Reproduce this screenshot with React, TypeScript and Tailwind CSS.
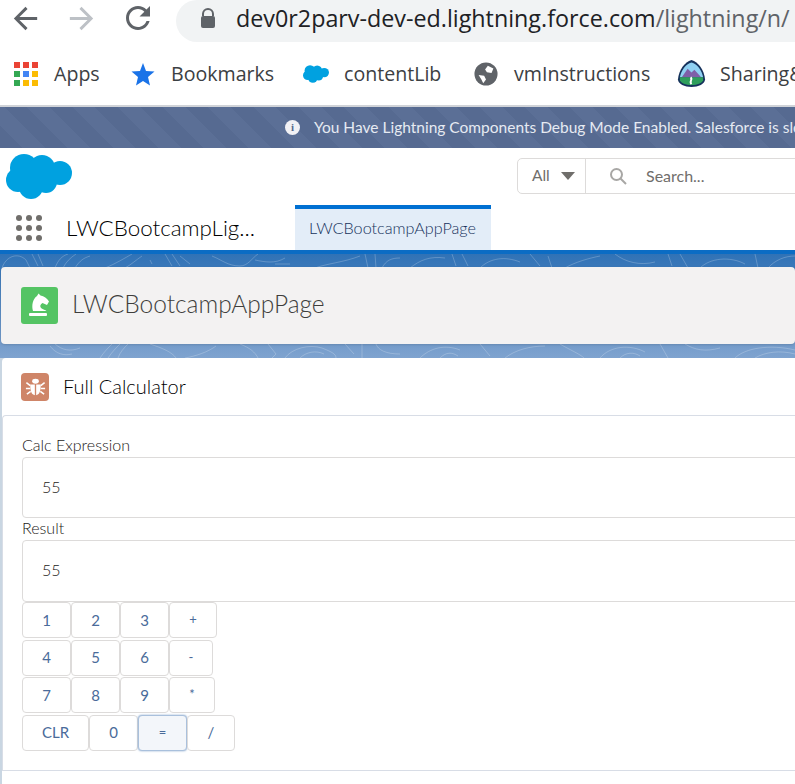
const keyRows = [
  [
    { label: "1", w: "w-[49px]" },
    { label: "2", w: "w-[49px]" },
    { label: "3", w: "w-[49px]" },
    { label: "+", w: "w-[48px]", op: true },
  ],
  [
    { label: "4", w: "w-[49px]" },
    { label: "5", w: "w-[49px]" },
    { label: "6", w: "w-[49px]" },
    { label: "-", w: "w-[44px]", op: true },
  ],
  [
    { label: "7", w: "w-[49px]" },
    { label: "8", w: "w-[49px]" },
    { label: "9", w: "w-[49px]" },
    { label: "*", w: "w-[46px]", op: true },
  ],
  [
    { label: "CLR", w: "w-[67px]" },
    { label: "0", w: "w-[49px]" },
    { label: "=", w: "w-[49px]", op: true, focus: true },
    { label: "/", w: "w-[48px]" },
  ],
]

function Cloud({ className }: { className: string }) {
  return (
    <svg viewBox="6 154 66 45" className={className} fill="#00a1e0">
      <circle cx="24" cy="168" r="14" />
      <circle cx="42" cy="168" r="13" />
      <circle cx="60" cy="173" r="12" />
      <circle cx="18" cy="180" r="12" />
      <circle cx="31" cy="187" r="12" />
      <circle cx="46" cy="182" r="11" />
      <rect x="20" y="165" width="38" height="18" />
    </svg>
  )
}

function AppsIcon() {
  const colors = ["#ea4335", "#ea4335", "#ea4335", "#34a853", "#4285f4", "#fbbc04", "#34a853", "#fbbc04", "#fbbc04"]
  return (
    <div className="grid grid-cols-3 gap-[3px] w-[24px] shrink-0">
      {colors.map((c, i) => (
        <span key={i} className="w-[6px] h-[6px]" style={{ backgroundColor: c }} />
      ))}
    </div>
  )
}

function TrailheadBadge() {
  return (
    <svg viewBox="0 0 30 30" className="w-[29px] h-[29px] shrink-0">
      <path d="M15 1 C22 3 28 11 29 21 C29 26 22 29 15 29 C8 29 1 26 1 21 C2 11 8 3 15 1Z" fill="#16325c" />
      <path d="M15 3.5 C21 5 26 12 27 19 L3 19 C4 12 9 5 15 3.5Z" fill="#8fd0f2" />
      <path d="M5 19 L11 10 L15 14 L18 11 L25 19Z" fill="#7f5fa8" />
      <path d="M3 19 H27 V22 C26 25 21 27 15 27 C9 27 4 25 3 22Z" fill="#2e9e5b" />
      <path d="M14 19 C17 21 12 23 15 26" stroke="#fff" strokeWidth="2" fill="none" />
    </svg>
  )
}

// contour lines, only the strips above and below the page header show
function Topo() {
  return (
    <svg className="absolute inset-0 w-full h-full" viewBox="0 0 795 104" fill="none" stroke="#ffffff" strokeOpacity="0.22">
      <path d="M2 14 C6 2 18 -2 26 6 L30 14 M32 0 L38 12 M38 0 L43 12 M55 14 C58 6 62 2 68 0 M63 14 C66 8 70 4 76 0 M75 14 C80 6 84 4 90 2" />
      <path d="M105 14 C115 10 125 4 132 0 M125 14 C132 10 136 6 142 2 M150 6 L152 10 M165 0 L172 12 M172 0 L180 12 M180 2 L190 10" />
      <path d="M212 2 C222 6 228 12 240 12 C248 12 252 4 258 0 M255 6 C265 8 275 10 285 4 M275 10 H290 M315 14 C325 10 345 8 360 2 M365 0 L368 14 M375 0 L376 14 M382 14 C386 6 392 4 400 4" />
      <path d="M410 14 C420 6 430 2 445 4 M452 0 L456 12 M462 0 L468 12 M480 14 C490 4 505 2 520 8 M530 0 L540 12 M548 2 L552 14 M565 14 C575 8 590 4 600 2" />
      <path d="M615 0 C625 8 640 12 655 8 M668 0 L672 12 M680 0 L688 14 M700 14 C710 4 730 2 745 10 M755 0 L758 14 M768 14 C775 6 785 2 795 2" />
      <path d="M50 92 C56 100 64 102 72 100 M55 90 C62 96 70 98 80 94 M100 104 C104 98 108 94 112 90 M108 104 C112 98 116 94 120 90 M118 104 C120 98 124 94 128 90" />
      <path d="M150 90 C162 94 172 98 176 104 M185 104 C196 102 208 98 216 92 M240 90 C250 94 255 98 258 104 M268 90 L276 100 L272 104" />
      <path d="M285 104 C292 94 310 90 322 94 C332 98 336 100 336 104 M300 104 C306 98 316 96 324 100 M345 90 L354 100 M362 90 L362 104 M376 90 C378 96 386 100 400 100" />
      <path d="M420 104 C430 94 445 90 460 96 M440 104 C446 98 452 98 458 102 M480 90 L490 102 M505 104 C515 96 530 92 545 92 M560 90 C570 96 580 100 584 104" />
      <path d="M600 104 C610 92 630 90 645 98 M620 104 C626 98 634 98 640 102 M660 90 L668 104 M685 90 C695 96 705 98 720 94 M735 104 C745 94 770 90 795 96 M755 104 C765 98 780 96 795 100" />
    </svg>
  )
}

export default function App() {
  return (
    <div className="w-[795px] h-[784px] overflow-hidden flex flex-col bg-white font-['Lato',sans-serif]">
      {/* browser chrome */}
      <div className="h-[42px] shrink-0 flex items-center font-['Open_Sans',sans-serif]">
        <svg viewBox="0 0 24 24" className="ml-[8px] mb-[6px] w-[35px] h-[35px] shrink-0" fill="#5f6368">
          <path d="M20 11H7.83l5.59-5.59L12 4l-8 8 8 8 1.41-1.41L7.83 13H20v-2z" />
        </svg>
        <svg viewBox="0 0 24 24" className="ml-[21px] mb-[6px] w-[35px] h-[35px] shrink-0" fill="#bdc1c6">
          <path d="M12 4l-1.41 1.41L16.17 11H4v2h12.17l-5.58 5.59L12 20l8-8z" />
        </svg>
        <svg viewBox="0 0 24 24" className="ml-[21px] mb-[6px] w-[36px] h-[36px] shrink-0" fill="#5f6368">
          <path d="M17.65 6.35C16.2 4.9 14.21 4 12 4c-4.42 0-7.99 3.58-7.99 8s3.57 8 7.99 8c3.73 0 6.84-2.55 7.73-6h-2.08c-.82 2.33-3.04 4-5.65 4-3.31 0-6-2.69-6-6s2.69-6 6-6c1.66 0 3.14.69 4.22 1.78L13 11h7V4l-2.35 2.35z" />
        </svg>
        <div className="ml-[20px] flex-1 h-[42px] rounded-l-[24px] bg-[#f1f3f4] flex items-center pl-[24px] pb-[6px] whitespace-nowrap overflow-hidden">
          <svg viewBox="0 0 16 20" className="w-[16px] h-[20px] shrink-0">
            <path d="M3 8 V6 a5 5 0 0 1 10 0 V8" fill="none" stroke="#5f6368" strokeWidth="2" />
            <rect x="1" y="8" width="14" height="12" rx="2" fill="#5f6368" />
          </svg>
          <span className="ml-[20px] text-[23.3px] text-[#202124]">dev0r2parv-dev-ed.lightning.force.com</span>
          <span className="text-[23.3px] text-[#5f6368]">/lightning/n/</span>
        </div>
      </div>

      {/* bookmarks */}
      <div className="h-[65px] shrink-0 flex items-center pl-[14px] text-[19.6px] text-[#3c4043] whitespace-nowrap font-['Open_Sans',sans-serif] border-b-2 border-[#d0d3d8]">
        <AppsIcon />
        <span className="ml-[16px] w-[47px] shrink-0">Apps</span>
        <svg viewBox="0 0 24 24" className="ml-[30px] w-[24px] h-[24px] shrink-0" fill="#1a73e8">
          <path d="M12 1 L15 9 L23.5 9.5 L17 15 L19 23.5 L12 19 L5 23.5 L7 15 L0.5 9.5 L9 9Z" />
        </svg>
        <span className="ml-[16px] w-[102px] shrink-0">Bookmarks</span>
        <Cloud className="ml-[30px] w-[26px] h-[18px] shrink-0" />
        <span className="ml-[15px] w-[98px] shrink-0">contentLib</span>
        <svg viewBox="0 0 26 26" className="ml-[32px] w-[24px] h-[24px] shrink-0">
          <circle cx="13" cy="13" r="12.5" fill="#5f6368" />
          <path d="M15 4 L21 7 L19 12 L14 11 L12 8Z M5 14 L11 15 L13 19 L10 23 L8 19Z" fill="#fff" />
        </svg>
        <span className="ml-[16px] w-[136px] shrink-0">vmInstructions</span>
        <div className="ml-[27px]"><TrailheadBadge /></div>
        <span className="ml-[14px]">Sharing&amp;</span>
      </div>

      {/* debug banner */}
      <div className="h-[41px] shrink-0 flex items-center pl-[285px] text-[15.5px] text-[#e6eaf2] whitespace-nowrap bg-[repeating-linear-gradient(45deg,#566a91,#566a91_16px,#5b6f96_16px,#5b6f96_32px)]">
        <span className="w-[15px] h-[15px] rounded-full bg-[#f1f1f5] text-[#54698d] text-[11px] font-bold flex items-center justify-center shrink-0 font-['Liberation_Serif',serif]">i</span>
        <span className="ml-[14px]">You Have Lightning Components Debug Mode Enabled. Salesforce is slower</span>
      </div>

      {/* global header */}
      <div className="h-[57px] shrink-0 flex bg-white">
        <Cloud className="ml-[6px] mt-[6px] w-[66px] h-[45px] shrink-0" />
        <div className="ml-[445px] mt-[10px] h-[36px] w-[400px] shrink-0 flex items-center rounded-l-[5px] border border-[#dddbda] text-[#706e6b] text-[16px]">
          <div className="w-[68px] h-full shrink-0 flex items-center pl-[14px] border-r border-[#dddbda]">
            <span className="text-[15.5px]">All</span>
            <svg viewBox="0 0 14 8" className="ml-[11px] w-[14px] h-[8px]"><path d="M0 0 H14 L7 8Z" fill="#706e6b" /></svg>
          </div>
          <svg viewBox="0 0 18 18" className="ml-[23px] w-[18px] h-[18px] shrink-0" fill="none" stroke="#a8a7a5" strokeWidth="2">
            <circle cx="7.5" cy="7.5" r="5.5" />
            <path d="M11.5 11.5 L17 17" />
          </svg>
          <span className="ml-[19px]">Search...</span>
        </div>
      </div>

      {/* app nav */}
      <div className="h-[45px] shrink-0 flex bg-white">
        <div className="ml-[16px] mt-[10px] w-[26px] h-[26px] grid grid-cols-3 gap-[4px] shrink-0">
          {Array.from({ length: 9 }).map((_, i) => (
            <span key={i} className="w-[6px] h-[6px] rounded-full bg-[#706e6b]" />
          ))}
        </div>
        <span className="ml-[24px] mt-[6px] w-[191px] shrink-0 text-[22.4px] font-light text-[#000000] whitespace-nowrap">LWCBootcampLig...</span>
        <div className="ml-[38px] w-[196px] shrink-0 bg-[#e3edf8] border-t-[4px] border-[#0070d2] flex items-center pl-[14px] pb-[3px] text-[16.2px] font-light text-[#16325c] whitespace-nowrap">
          LWCBootcampAppPage
        </div>
      </div>

      {/* page body */}
      <div className="relative h-[108px] shrink-0 border-t-[4px] border-[#0b6cc4] bg-[linear-gradient(180deg,#3072b6,#7fa3cf)] pt-[13px] pl-[1px]">
        <Topo />
        <div className="relative h-[77px] rounded-[4px] bg-[#f3f2f2] flex items-center pl-[20px] shadow-sm">
          <div className="w-[37px] h-[37px] rounded-[3px] bg-[#54c464] shrink-0">
            <svg viewBox="0 0 37 37" className="w-[37px] h-[37px]" fill="#ffffff">
              <path d="M12 24 C10.5 19 11.5 12 16 9 L17.5 6.5 L19.5 8.5 C23 9 26 11.5 28 14.5 L26 18 L21.5 16 C19.5 17 18.5 19 20 21 C22 22.5 24.5 23 25.5 24 Z" />
              <rect x="8" y="26" width="18" height="3" rx="1" />
            </svg>
          </div>
          <span className="ml-[14px] pb-[2px] text-[24.5px] font-light text-[#3e3e3c] whitespace-nowrap">LWCBootcampAppPage</span>
        </div>
      </div>

      {/* card */}
      <div className="flex-1 bg-[#c9d6e2] pl-[2px]">
        <div className="h-full rounded-tl-[4px] bg-white flex flex-col">
          <div className="h-[57px] shrink-0 flex items-center pl-[19px]">
            <div className="w-[28px] h-[28px] rounded-[4px] bg-[#cf8568] flex items-center justify-center shrink-0">
              <svg viewBox="0 0 24 24" className="w-[23px] h-[23px]" fill="#ffffff" stroke="#ffffff" strokeWidth="1.6">
                <ellipse cx="12" cy="6.5" rx="3.5" ry="2.5" stroke="none" />
                <path d="M6.5 10 H11.3 V21 C8 21 6.5 17 6.5 10Z M12.7 10 H17.5 C17.5 17 16 21 12.7 21Z" stroke="none" />
                <path d="M2.5 8 L6.5 11 M21.5 8 L17.5 11 M2 14 H6.5 M22 14 H17.5 M3 20 L7 17 M21 20 L17 17" fill="none" />
              </svg>
            </div>
            <span className="ml-[14px] pb-[2px] text-[20px] font-light text-[#000000] whitespace-nowrap">Full Calculator</span>
          </div>
          <div className="h-[356px] shrink-0 rounded-tl-[4px] border-t border-l border-b border-[#d8dde6] pl-[19px] pt-[21px] text-[16px] font-light text-[#1c1a18]">
            <div className="h-[20px] leading-[16px]">Calc Expression</div>
            <div className="h-[61px] w-[800px] rounded-[4px] border border-[#dddbda] flex items-center pl-[19px] pb-[2px]">55</div>
            <div className="h-[22px] leading-[20px]">Result</div>
            <div className="h-[62px] w-[800px] rounded-[4px] border border-[#dddbda] flex items-center pl-[19px] pb-[2px]">55</div>
            <div className="flex flex-col gap-[1.5px]">
              {keyRows.map((row, r) => (
                <div key={r} className="flex h-[36px]">
                  {row.map((k) => (
                    <div
                      key={k.label}
                      className={`${k.w} h-full shrink-0 rounded-[4px] border flex items-center justify-center font-normal text-[#4a6b9a] ${k.op ? "text-[13px]" : "text-[15px]"} ${k.focus ? "bg-[#f3f6fa] border-[#a9c0dc] shadow-[0_0_2px_#7f9fc8]" : "bg-white border-[#dddbda]"}`}
                    >
                      {k.label}
                    </div>
                  ))}
                </div>
              ))}
            </div>
          </div>
        </div>
      </div>
    </div>
  )
}
